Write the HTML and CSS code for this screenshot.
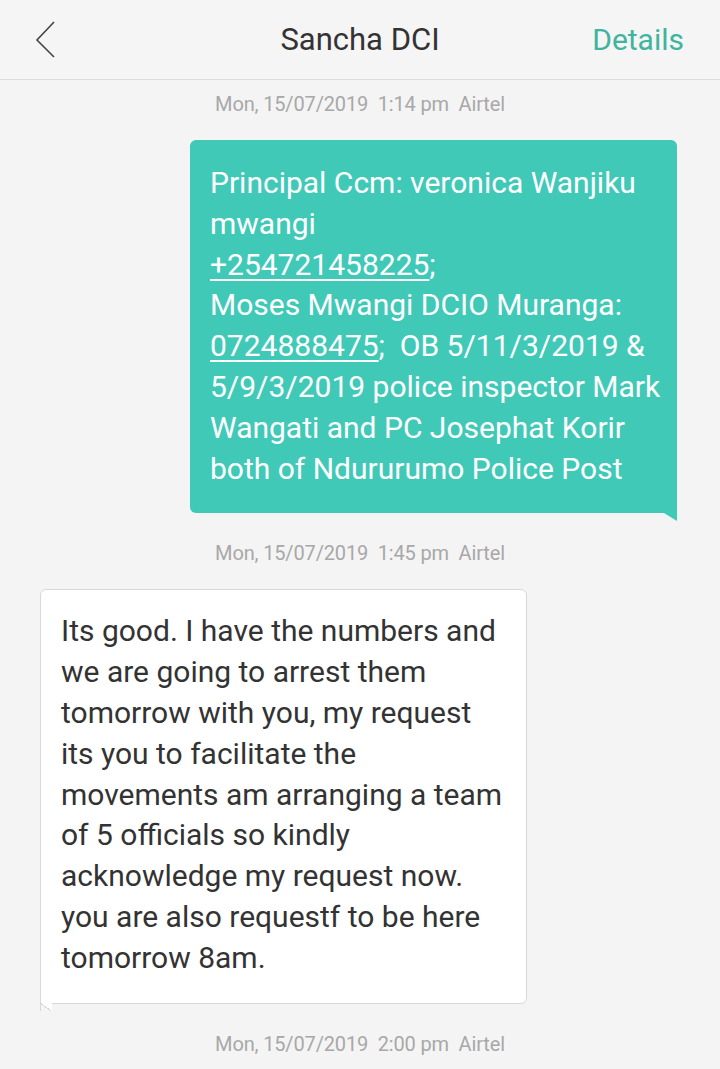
FILE: index.html
```html
<!DOCTYPE html>
<html>
<head>
<meta charset="utf-8">
<link rel="stylesheet" href="styles.css">
</head>
<body>
<header class="topbar">
  <svg class="back" width="30" height="40" viewBox="0 0 30 40"><polyline points="19,2 2,20 19,37" fill="none" stroke="#444" stroke-width="1.6"/></svg>
  <div class="title">Sancha DCI</div>
  <div class="details">Details</div>
</header>
<main class="thread">
  <div class="stamp">Mon, 15/07/2019&nbsp; 1:14 pm&nbsp; Airtel</div>
  <div class="row out">
    <div class="bubble sent">Principal Ccm: veronica Wanjiku<br>mwangi<br><u>+254721458225</u>;<br>Moses Mwangi DCIO Muranga:<br><u>0724888475</u>;&nbsp; OB 5/11/3/2019 &amp;<br>5/9/3/2019 police inspector Mark<br>Wangati and PC Josephat Korir<br>both of Ndururumo Police Post</div>
  </div>
  <div class="stamp">Mon, 15/07/2019&nbsp; 1:45 pm&nbsp; Airtel</div>
  <div class="row in">
    <div class="bubble recv">Its good. I have the numbers and<br>we are going to arrest them<br>tomorrow with you, my request<br>its you to facilitate the<br>movements am arranging a team<br>of 5 officials so kindly<br>acknowledge my request now.<br>you are also requestf to be here<br>tomorrow 8am.</div>
  </div>
  <div class="stamp">Mon, 15/07/2019&nbsp; 2:00 pm&nbsp; Airtel</div>
</main>
</body>
</html>
```
FILE: styles.css
```css
html, body {
  margin: 0;
  padding: 0;
  background: #f4f4f4;
  font-family: Roboto, "Noto Sans", sans-serif;
}
.topbar {
  height: 79px;
  border-bottom: 1px solid #dcdcdc;
  background: #f5f5f5;
  display: flex;
  align-items: center;
  position: relative;
}
.back {
  margin-left: 35px;
}
.title {
  position: absolute;
  left: 0;
  right: 0;
  text-align: center;
  font-size: 31px;
  color: #333;
}
.details {
  margin-left: auto;
  margin-right: 36px;
  font-size: 30px;
  color: #3fb49f;
  position: relative;
}
.thread {
  display: flex;
  flex-direction: column;
}
.stamp {
  text-align: center;
  font-size: 20px;
  line-height: 22px;
  color: #a8a8a8;
  letter-spacing: -0.15px;
  margin-top: 13px;
  margin-bottom: 25px;
}
.row + .stamp {
  margin-top: 29px;
}
.row {
  display: flex;
}
.row.out {
  justify-content: flex-end;
  padding-right: 43px;
}
.row.in {
  justify-content: flex-start;
  padding-left: 40px;
}
.bubble {
  position: relative;
  font-size: 30px;
  line-height: 40.8px;
  border-radius: 6px;
  box-sizing: border-box;
  white-space: nowrap;
}
.sent {
  width: 487px;
  background: #41c9b8;
  color: #fff;
  padding: 23px 20px 24px 20px;
  border-bottom-right-radius: 0;
}
.sent::after {
  content: "";
  position: absolute;
  right: 0;
  bottom: -8px;
  width: 0;
  height: 0;
  border-top: 8px solid #41c9b8;
  border-left: 13px solid transparent;
}
.sent u {
  text-decoration-thickness: 1.5px;
  text-underline-offset: 4px;
}
.recv {
  width: 487px;
  background: #fff;
  color: #333;
  border: 1px solid #d8d8d8;
  padding: 21px 20px 24px 20px;
  border-bottom-left-radius: 0;
}
.recv::before {
  content: "";
  position: absolute;
  left: -1px;
  bottom: -8px;
  width: 12px;
  height: 8px;
  background: linear-gradient(to top right, transparent calc(50% - 1px), #d8d8d8 calc(50% - 1px), #d8d8d8 50%, #fff 50%);
  border-left: 1px solid #d8d8d8;
  box-sizing: border-box;
}
```
